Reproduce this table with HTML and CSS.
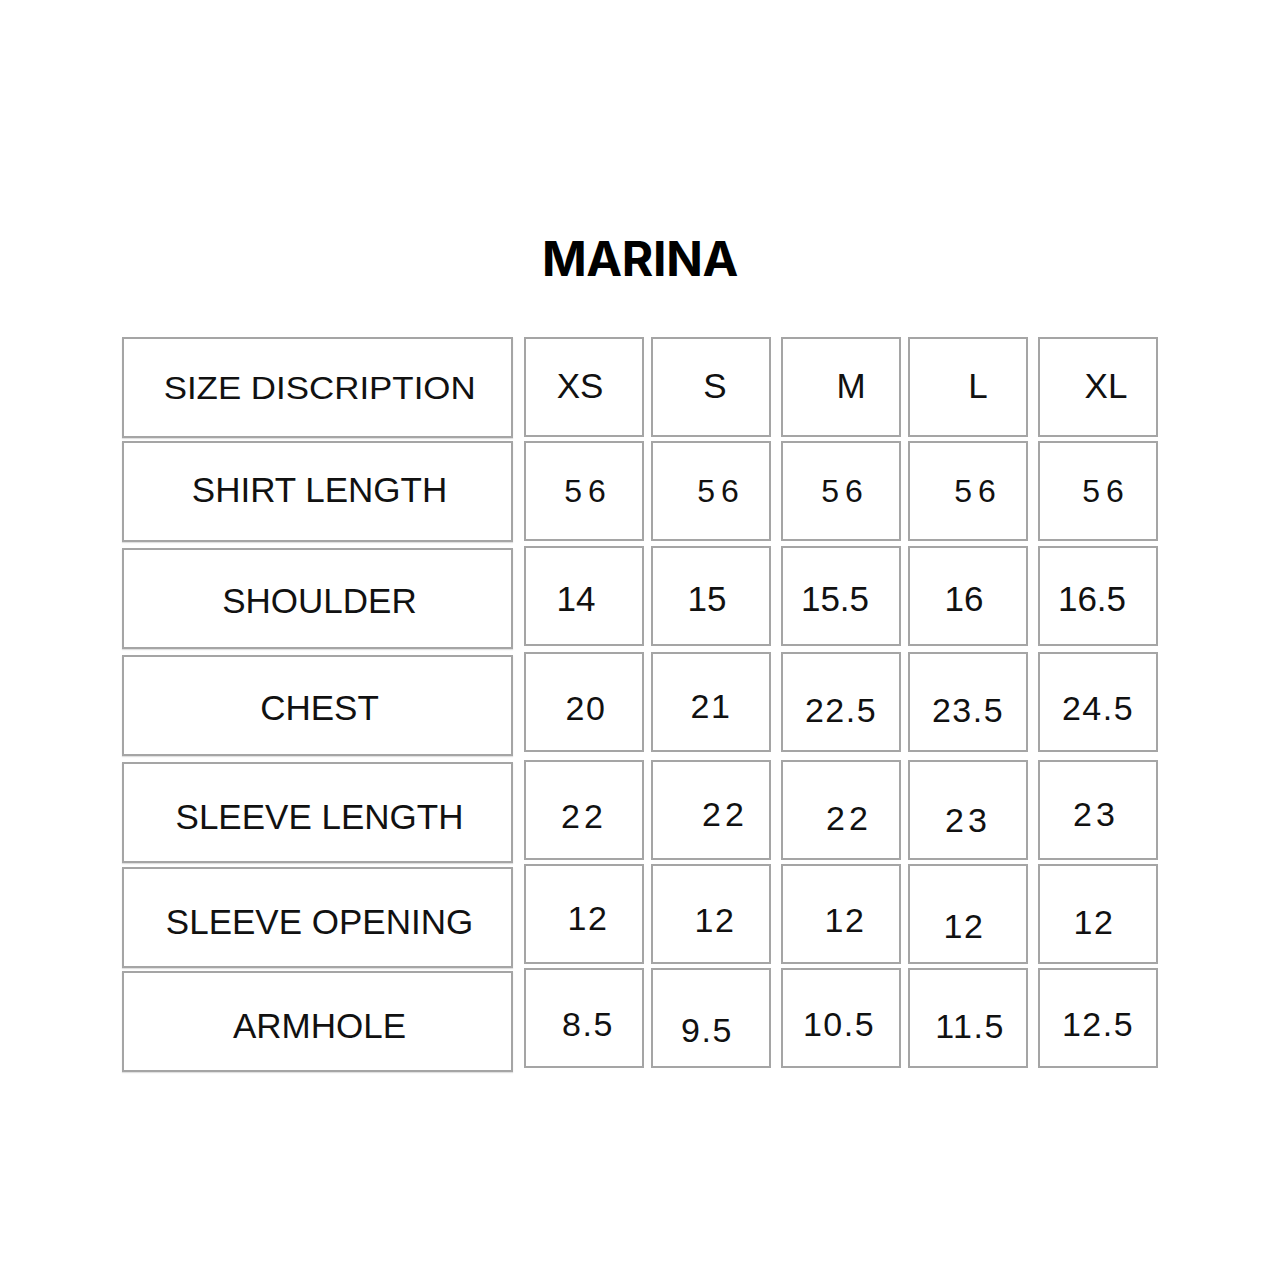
FILE: index.html
```html
<!DOCTYPE html>
<html lang="en">
<head>
<meta charset="utf-8">
<title>MARINA size chart</title>
<link rel="stylesheet" href="styles.css">
</head>
<body>
<main class="page">
  <h1 class="title">MARINA</h1>
  <div class="chart">
    <div class="labels">
      <div class="cell label head"><span class="wide">SIZE DISCRIPTION</span></div>
      <div class="cell label yu2">SHIRT LENGTH</div>
      <div class="cell label yd2">SHOULDER</div>
      <div class="cell label yd2">CHEST</div>
      <div class="cell label yd4">SLEEVE LENGTH</div>
      <div class="cell label yd4">SLEEVE OPENING</div>
      <div class="cell label yd4">ARMHOLE</div>
    </div>
    <div class="sizes">
      <div class="cell h xl4 yu2">XS</div>
      <div class="cell h xr4 yu2">S</div>
      <div class="cell h xr10 yu2">M</div>
      <div class="cell h xr10 yu2">L</div>
      <div class="cell h xr8 yu2">XL</div>

      <div class="cell n2 xr4">56</div>
      <div class="cell n2 xr10">56</div>
      <div class="cell n2 xr4">56</div>
      <div class="cell n2 xr10">56</div>
      <div class="cell n2 xr8">56</div>

      <div class="cell n3 xl8 yd2">14</div>
      <div class="cell n3 xl4 yd2">15</div>
      <div class="cell n3 xl6 yd2">15.5</div>
      <div class="cell n3 xl4 yd2">16</div>
      <div class="cell n3 xl6 yd2">16.5</div>

      <div class="cell n xr2 yd6">20</div>
      <div class="cell n yd4">21</div>
      <div class="cell n yd8">22.5</div>
      <div class="cell n yd8">23.5</div>
      <div class="cell n yd6">24.5</div>

      <div class="cell n5 yd6">22</div>
      <div class="cell n5 xr14 yd4">22</div>
      <div class="cell n5 xr8 yd8">22</div>
      <div class="cell n5 yd10">23</div>
      <div class="cell n5 xl2 yd4">23</div>

      <div class="cell n xr4 yd4">12</div>
      <div class="cell n xr4 yd6">12</div>
      <div class="cell n xr4 yd6">12</div>
      <div class="cell n xl4 yd12">12</div>
      <div class="cell n xl4 yd8">12</div>

      <div class="cell n xr4 yd6">8.5</div>
      <div class="cell n xl4 yd12">9.5</div>
      <div class="cell n xl2 yd6">10.5</div>
      <div class="cell n xr2 yd8">11.5</div>
      <div class="cell n yd6">12.5</div>
    </div>
  </div>
</main>
</body>
</html>
```
FILE: styles.css
```css
* { box-sizing: border-box; }

html, body {
  margin: 0;
  padding: 0;
  background: #ffffff;
}

body {
  width: 1280px;
  height: 1280px;
  font-family: "Liberation Sans", Arial, sans-serif;
  color: #111111;
}

.page {
  padding-top: 235px;
}

.title {
  margin: 0;
  text-align: center;
  font-family: Inter, "Open Sans", sans-serif;
  font-weight: 700;
  font-size: 48px;
  line-height: 48px;
  letter-spacing: -0.3px;
  color: #000000;
}

.chart {
  display: flex;
  gap: 11px;
  margin-top: 54px;
  margin-left: 122px;
}

.labels {
  display: grid;
  grid-template-columns: 391px;
  grid-template-rows: 104px 107px 107px 107px 105px 104px 101px;
}

.sizes {
  display: grid;
  grid-template-columns: 127px 130px 127px 130px 120px;
  grid-template-rows: 104px 105px 106px 108px 104px 104px 100px;
}

.cell {
  display: flex;
  align-items: center;
  justify-content: center;
  border: 2px solid #a5a5a5;
  background: #ffffff;
  white-space: nowrap;
  line-height: 1;
}

.label {
  width: 391px;
  height: 101px;
  font-size: 35px;
  padding-left: 4px;
  box-shadow: 0 1px 1px rgba(0, 0, 0, 0.12);
}

.label.head {
  font-size: 31px;
  padding-top: 2px;
}

.wide {
  display: inline-block;
  transform: scaleX(1.125);
}

.sizes .cell {
  width: 120px;
  height: 100px;
}

.h { font-size: 35px; }
.n2 { font-size: 32px; letter-spacing: 6px; }
.n3 { font-size: 35px; }
.n { font-size: 34px; letter-spacing: 1.5px; }
.n5 { font-size: 34px; letter-spacing: 4px; }

/* small hand-placement nudges of cell text */
.xl8 { padding-right: 16px; }
.xl6 { padding-right: 12px; }
.xl4 { padding-right: 8px; }
.xl2 { padding-right: 4px; }
.xr2 { padding-left: 4px; }
.xr4 { padding-left: 8px; }
.xr6 { padding-left: 12px; }
.xr8 { padding-left: 16px; }
.xr10 { padding-left: 20px; }
.xr12 { padding-left: 24px; }
.xr14 { padding-left: 28px; }

.yu2 { padding-bottom: 4px; }
.yd2 { padding-top: 4px; }
.yd4 { padding-top: 8px; }
.yd6 { padding-top: 12px; }
.yd8 { padding-top: 16px; }
.yd10 { padding-top: 20px; }
.yd12 { padding-top: 24px; }
```
